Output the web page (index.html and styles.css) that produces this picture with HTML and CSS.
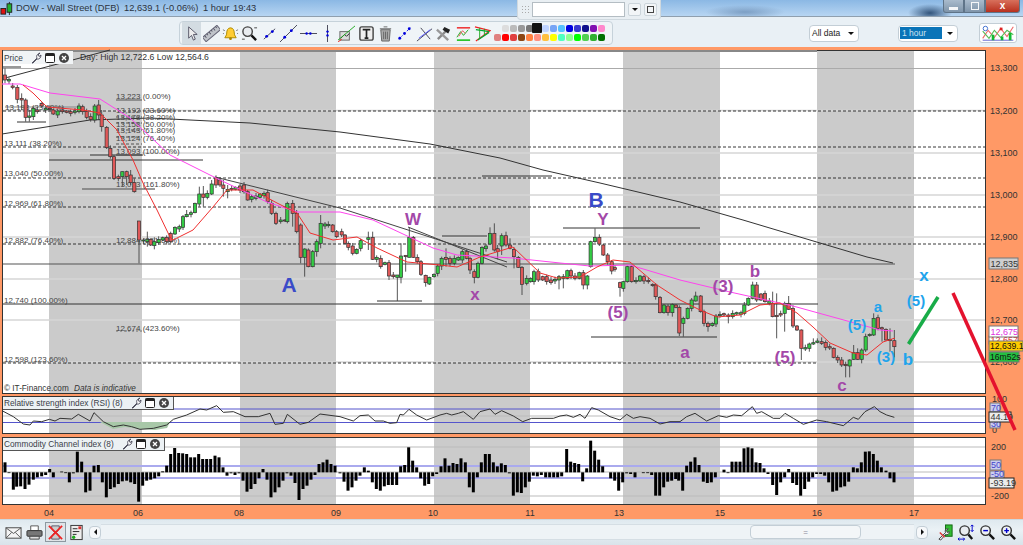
FILE: index.html
```html
<!DOCTYPE html>
<html lang="en">
<head>
    <meta charset="UTF-8">
    <title>DOW - Wall Street (DFB)</title>
    <link rel="stylesheet" href="styles.css">
</head>
<body>

    <svg class="icon-defs">
        <symbol id="i-pointer" viewBox="0 0 18 18"><path d="M6 2v12l3-3 2 5 2-1-2-5h4z" fill="#eee" stroke="#556"/></symbol>
        <symbol id="i-ruler" viewBox="0 0 18 18"><g transform="rotate(-40 9 9)"><rect x="-1" y="6" width="20" height="6" fill="#c0c4ca" stroke="#667"/><path d="M2 6v3M5 6v2M8 6v3M11 6v2M14 6v3M17 6v2" stroke="#556"/></g></symbol>
        <symbol id="i-bell" viewBox="0 0 18 18"><path d="M9 3c-3 0-4 3-4 5.5 0 3-2 4-2 5h12c0-1-2-2-2-5C13 6 12 3 9 3z" fill="#fc3" stroke="#a80"/><circle cx="9" cy="14.5" r="1.5" fill="#a80"/><path d="M1 5l2 1M1 9h1M17 5l-2 1M17 9h-1" stroke="#777"/></symbol>
        <symbol id="i-zoom" viewBox="0 0 18 18"><circle cx="7" cy="7" r="5" fill="#e8ecf0" stroke="#444" stroke-width="1.5"/><path d="M11 11l5 5" stroke="#111" stroke-width="2.5"/><path d="M1 15h3M14 3h3" stroke="#444"/></symbol>
        <symbol id="i-seg" viewBox="0 0 18 18"><path d="M3 15L15 4" stroke="#445"/><circle cx="6" cy="12" r="1.5" fill="#00d"/><circle cx="12" cy="7" r="1.5" fill="#00d"/></symbol>
        <symbol id="i-ray" viewBox="0 0 18 18"><path d="M0 18L18 0" stroke="#445"/><circle cx="5" cy="13" r="1.5" fill="#00d"/><circle cx="12" cy="6" r="1.5" fill="#00d"/></symbol>
        <symbol id="i-hline" viewBox="0 0 18 18"><path d="M0 9h18" stroke="#445"/><circle cx="7" cy="9" r="1.3" fill="#00d"/><circle cx="11" cy="9" r="1.3" fill="#00d"/></symbol>
        <symbol id="i-vline" viewBox="0 0 18 18"><path d="M9 0v18" stroke="#445"/><circle cx="9" cy="7" r="1.3" fill="#00d"/><circle cx="9" cy="11" r="1.3" fill="#00d"/></symbol>
        <symbol id="i-trend" viewBox="0 0 18 18"><rect x="2" y="7" width="10" height="9" fill="#ddd" stroke="#666"/><path d="M3 14l4-4 2 2 3-3" stroke="#222" fill="none"/><path d="M0 16L18 1" stroke="#2a2"/><path d="M0 18l4-3" stroke="#e22"/></symbol>
        <symbol id="i-text" viewBox="0 0 18 18"><rect x="2" y="2" width="14" height="14" rx="2" fill="#eee" stroke="#444" stroke-width="1.5"/><path d="M5 5h8M9 5v9M7 14h4" stroke="#222" stroke-width="1.8" fill="none"/></symbol>
        <symbol id="i-trash" viewBox="0 0 18 18"><path d="M4 5h10l-1 12H5z" fill="#aaa" stroke="#666"/><path d="M3 4h12M7 2h4M7 7v8M9 7v8M11 7v8" stroke="#666"/></symbol>
        <symbol id="i-dotted" viewBox="0 0 18 18"><path d="M3 15L15 3" stroke="#00d" stroke-dasharray="1.5 2.5"/><circle cx="4" cy="14" r="1.5" fill="#00d"/><circle cx="9" cy="9" r="1.5" fill="#00d"/><circle cx="14" cy="4" r="1.5" fill="#00d"/></symbol>
        <symbol id="i-cross" viewBox="0 0 18 18"><path d="M1 17L17 4M5 3l10 12" stroke="#445"/><path d="M3 14L15 5" stroke="#55f"/></symbol>
        <symbol id="i-tools" viewBox="0 0 18 18"><path d="M3 15L13 5" stroke="#888" stroke-width="2.5"/><path d="M2 5l12 11" stroke="#999" stroke-width="2.5"/><path d="M10 2l6 3-2 4-6-4z" fill="#222"/></symbol>
        <symbol id="i-fib" viewBox="0 0 18 18"><path d="M2 3h14" stroke="#e22" stroke-width="1.5"/><path d="M2 16h14" stroke="#0b0" stroke-width="1.5"/><path d="M2 13l4-6 3 4 5-6" stroke="#2a2" fill="none"/><path d="M4 12l4-6 3 3" stroke="#e55" fill="none"/></symbol>
        <symbol id="i-fan" viewBox="0 0 18 18"><path d="M1 2l16 4-15 11" stroke="#e22" fill="none" stroke-width="1.3"/><path d="M2 5l14 2M4 16L16 8" stroke="#0a3" stroke-width="1.3"/><path d="M6 3v11M11 4v7" stroke="#2a2"/></symbol>
        <symbol id="i-wrench" viewBox="0 0 12 12"><path d="M2 11l5-5c-1-2 0-4 3-5L8 3l1 1.5L11 3c0 3-2 4.5-4 4l-4 4z" fill="#fff" stroke="#445" stroke-width=".9"/></symbol>
        <symbol id="i-window" viewBox="0 0 12 12"><rect x="1.5" y="1.5" width="9" height="9" rx="1" fill="#fff" stroke="#222"/><rect x="1.5" y="1.5" width="9" height="2.5" fill="#222"/></symbol>
        <symbol id="i-close" viewBox="0 0 12 12"><circle cx="6" cy="6" r="5" fill="#444"/><path d="M4 4l4 4M8 4l-4 4" stroke="#fff" stroke-width="1.3"/></symbol>
        <symbol id="i-mail" viewBox="0 0 18 18"><rect x="1" y="4" width="16" height="11" fill="#f4f4f4" stroke="#444"/><path d="M1 4l8 6 8-6M1 15l6-6M17 15l-6-6" stroke="#555" fill="none"/></symbol>
        <symbol id="i-print" viewBox="0 0 18 18"><path d="M5 2h8v5H5z" fill="#fff" stroke="#555"/><rect x="1" y="7" width="16" height="6" rx="1" fill="#777" stroke="#333"/><path d="M4 13h10v3H4z" fill="#ddd" stroke="#444"/></symbol>
        <symbol id="i-glass" viewBox="0 0 18 18"><path d="M5 2h8v3l-3 4 3 4v3H5v-3l3-4-3-4z" fill="#ccc" stroke="#556"/><path d="M2 2l14 14M16 2L2 16" stroke="#e22" stroke-width="1.8"/></symbol>
        <symbol id="i-doc" viewBox="0 0 18 18"><rect x="3" y="1.5" width="12" height="15" fill="#eee" stroke="#333"/><path d="M5 5h5M5 8h7M5 11h4" stroke="#222"/><rect x="11" y="2.5" width="3" height="3" fill="#d33"/><circle cx="6" cy="14" r="1.8" fill="#2a2"/></symbol>
        <symbol id="i-wrench-green" viewBox="0 0 18 18"><rect x="9" y="1" width="7" height="12" fill="#3b3" stroke="#161"/><path d="M2 16l7-7c-1-2 0-4 3-4l-2 2 1 2 2-1c0 3-2 4-4 3l-5 6z" fill="#eee" stroke="#444"/><path d="M3 9l5 5" stroke="#d33" stroke-width="1.5"/></symbol>
        <symbol id="i-zoom-fit" viewBox="0 0 18 18"><circle cx="7" cy="7" r="5" fill="#e8ecf0" stroke="#333" stroke-width="1.5"/><path d="M11 11l4 5" stroke="#111" stroke-width="2.5"/><path d="M15 1v7M13.5 2.5L15 1l1.5 1.5M13.5 6.5L15 8l1.5-1.5M0 16h7M1.5 14.5L0 16l1.5 1.5M5.5 14.5L7 16l-1.5 1.5" stroke="#00c" fill="none"/></symbol>
        <symbol id="i-zoom-out" viewBox="0 0 18 18"><circle cx="7" cy="7" r="5" fill="#eef2f5" stroke="#333" stroke-width="1.5"/><path d="M11 11l5 5" stroke="#111" stroke-width="2.5"/><path d="M4.5 7h5" stroke="#00c" stroke-width="1.5"/></symbol>
        <symbol id="i-zoom-in" viewBox="0 0 18 18"><circle cx="7" cy="7" r="5" fill="#eef2f5" stroke="#333" stroke-width="1.5"/><path d="M11 11l5 5" stroke="#111" stroke-width="2.5"/><path d="M4.5 7h5M7 4.5v5" stroke="#00c" stroke-width="1.5"/></symbol>
    </svg>

    <header class="title-bar">
        <svg class="app-icon" viewBox="0 0 16 16">
            <rect x="1" y="8" width="5" height="6" fill="#e01010" stroke="#222"/>
            <path d="M10 1v14" stroke="#222"/>
            <rect x="7.5" y="3" width="5" height="9" fill="#20b030" stroke="#222"/>
        </svg>
        <span class="title-name">DOW - Wall Street (DFB)</span>
        <span class="title-price">12,639.1 (-0.06%)</span>
        <span class="title-interval">1 hour</span>
        <span class="title-time">19:43</span>
        <div class="window-buttons">
            <div class="win-btn win-min"><i class="min-glyph"></i></div>
            <div class="win-btn win-max"><i class="max-glyph"></i></div>
            <div class="win-btn win-close">x</div>
        </div>
    </header>

    <div class="toolbar">
        <div class="tool-group">
            <div class="tool tool-active"><svg><use href="#i-pointer"/></svg></div>
            <div class="tool"><svg><use href="#i-ruler"/></svg></div>
            <div class="tool"><svg><use href="#i-bell"/></svg></div>
            <div class="tool"><svg><use href="#i-zoom"/></svg></div>
            <div class="tool"><svg><use href="#i-seg"/></svg></div>
            <div class="tool"><svg><use href="#i-ray"/></svg></div>
            <div class="tool"><svg><use href="#i-hline"/></svg></div>
            <div class="tool"><svg><use href="#i-vline"/></svg></div>
            <div class="tool"><svg><use href="#i-trend"/></svg></div>
            <div class="tool"><svg><use href="#i-text"/></svg></div>
            <div class="tool"><svg><use href="#i-trash"/></svg></div>
            <div class="tool"><svg><use href="#i-dotted"/></svg></div>
            <div class="tool"><svg><use href="#i-cross"/></svg></div>
            <div class="tool"><svg><use href="#i-tools"/></svg></div>
            <div class="tool"><svg><use href="#i-fib"/></svg></div>
            <div class="tool"><svg><use href="#i-fan"/></svg></div>
            <div class="palette" id="palette"></div>
        </div>
        <div class="select select-range"><span class="select-value">All data</span><i class="caret"></i></div>
        <div class="select select-interval"><span class="select-value selected">1 hour</span><i class="caret"></i></div>
        <div class="style-button">
            <svg viewBox="0 0 38 20">
                <path d="M2 16l6-9 7 8 7-10 7 9 7-11" fill="none" stroke="#e66" stroke-width="1.2"/>
                <path d="M2 8l7 8 6-9 7 8 7-8 7 5" fill="none" stroke="#5b5" stroke-width="1.2"/>
                <path d="M2 18h34" stroke="#55c"/>
                <path d="M12 12h3v6h-3zM22 14h3v4h-3zM31 10h3v8h-3z" fill="#1b3"/>
                <path d="M21 4h3v3h-3z" fill="#d22"/>
                <circle cx="5" cy="5" r="2.5" fill="#fff" stroke="#36c"/>
            </svg>
        </div>
    </div>

    <div class="name-panel">
        <i class="grip"></i>
        <div class="name-input"></div>
        <div class="panel-btn"><i class="caret"></i></div>
        <div class="panel-btn"><i class="panel-square"></i></div>
    </div>

    <main class="chart-area">
        <section class="pane">
            <svg class="plot" id="price" width="1023" height="344" viewBox="0 50 1023 344">
                <g id="price-back"></g>
                <g class="fib">
                    <text x="116" y="99">13,223 (0.00%)</text>
                    <text x="116" y="113">13,192 (23.60%)</text>
                    <text x="116" y="120">13,173 (38.20%)</text>
                    <text x="116" y="127">13,158 (50.00%)</text>
                    <text x="116" y="133">13,143 (61.80%)</text>
                    <text x="116" y="141">13,124 (76.40%)</text>
                    <text x="116" y="154">13,093 (100.00%)</text>
                    <text x="116" y="187">13,013 (161.80%)</text>
                    <text x="116" y="243">12,884 (261.80%)</text>
                    <text x="116" y="331">12,674 (423.60%)</text>
                    <text x="5" y="110">13,193 (23.60%)</text>
                    <text x="4" y="146">13,111 (38.20%)</text>
                    <text x="4" y="176">13,040 (50.00%)</text>
                    <text x="4" y="206">12,969 (61.80%)</text>
                    <text x="4" y="243">12,882 (76.40%)</text>
                    <text x="4" y="303">12,740 (100.00%)</text>
                    <text x="4" y="362">12,598 (123.60%)</text>
                </g>
                <g id="price-front"></g>
                <text class="day-range" x="80" y="60">Day: High 12,722.6 Low 12,564.6</text>
                <text class="credit" x="4" y="391">© IT-Finance.com <tspan class="credit-note" dx="3">Data is indicative</tspan></text>

                <g class="wave wave-blue">
                    <text class="big" x="289" y="292">A</text>
                    <text class="big" x="596" y="207">B</text>
                </g>
                <g class="wave wave-purple">
                    <text x="413" y="225">W</text>
                    <text x="603" y="225">Y</text>
                    <text x="475" y="300">x</text>
                    <text x="618" y="318">(5)</text>
                    <text x="685" y="358">a</text>
                    <text x="723" y="292">(3)</text>
                    <text x="755" y="277">b</text>
                    <text x="785" y="363">(5)</text>
                    <text x="842" y="391">c</text>
                </g>
                <g class="wave wave-cyan">
                    <text class="small" x="878" y="312">a</text>
                    <text class="small" x="857" y="330">(5)</text>
                    <text class="small" x="886" y="362">(3)</text>
                    <text x="908" y="365">b</text>
                    <text x="924" y="281">x</text>
                    <text class="small" x="916" y="306">(5)</text>
                </g>
                <path class="green-leg" d="M908.5 344L938 297"/>

                <g class="axis">
                    <text x="990" y="71">13,300</text>
                    <text x="990" y="114">13,200</text>
                    <text x="990" y="156">13,100</text>
                    <text x="990" y="198">13,000</text>
                    <text x="990" y="240">12,900</text>
                    <text x="990" y="282">12,800</text>
                    <text x="990" y="323">12,700</text>
                    <text x="990" y="365">12,600</text>
                </g>
                <g class="axis-tags">
                    <rect class="tag-gray" x="989" y="258" width="29" height="11"/>
                    <text x="990.5" y="266.5">12,835</text>
                    <rect class="tag-red" x="989" y="336" width="29" height="8"/>
                    <text class="txt-red" x="990.5" y="342.5">12,657</text>
                    <rect class="tag-magenta" x="989" y="326" width="29" height="11"/>
                    <text class="txt-magenta" x="990.5" y="334.5">12,675</text>
                    <rect class="tag-yellow" x="989" y="341" width="34" height="10"/>
                    <text class="txt-tight" x="990" y="349">12,639.1</text>
                    <rect class="tag-green" x="989" y="352" width="30" height="10"/>
                    <text class="txt-tight" x="990" y="360">16m52s</text>
                </g>
            </svg>
            <div class="pane-tag">
                <span class="tag-name">Price</span>
                <svg><use href="#i-wrench"/></svg><svg><use href="#i-window"/></svg><svg><use href="#i-close"/></svg>
            </div>
        </section>

        <section class="pane">
            <svg class="plot" id="rsi" width="1023" height="38" viewBox="0 396 1023 38">
                <g id="rsi-back"></g>
                <g id="rsi-front"></g>
                <g class="axis">
                    <text x="992" y="402">100</text>
                    <text x="992" y="433">0</text>
                </g>
                <g class="axis-tags">
                    <rect class="tag-blue" x="990" y="403" width="10" height="9"/>
                    <text class="txt-blue" x="991" y="411">70</text>
                    <rect class="tag-blue" x="990" y="419" width="10" height="9"/>
                    <text class="txt-blue" x="991" y="427">30</text>
                    <rect class="tag-white" x="989" y="412" width="22" height="10"/>
                    <text x="990.5" y="420">44.19</text>
                </g>
            </svg>
            <div class="pane-tag">
                <span class="tag-name">Relative strength index (RSI) (8)</span>
                <svg><use href="#i-wrench"/></svg><svg><use href="#i-window"/></svg><svg><use href="#i-close"/></svg>
            </div>
        </section>

        <section class="pane">
            <svg class="plot" id="cci" width="1023" height="68" viewBox="0 437 1023 68">
                <g id="cci-back"></g>
                <g id="cci-front"></g>
                <g class="axis">
                    <text x="991" y="450">200</text>
                    <text x="991" y="499">-200</text>
                </g>
                <g class="axis-tags">
                    <rect class="tag-blue" x="990" y="460" width="11" height="10"/>
                    <text class="txt-blue" x="991" y="468">50</text>
                    <rect class="tag-blue" x="990" y="471" width="14" height="8"/>
                    <text class="txt-blue" x="991" y="477">-50</text>
                    <rect class="tag-white" x="989" y="478" width="25" height="10"/>
                    <text x="990.5" y="486">-93.19</text>
                </g>
            </svg>
            <div class="pane-tag">
                <span class="tag-name">Commodity Channel index (8)</span>
                <svg><use href="#i-wrench"/></svg><svg><use href="#i-window"/></svg><svg><use href="#i-close"/></svg>
            </div>
        </section>

        <svg class="date-axis" width="1023" height="14" viewBox="0 505 1023 14">
            <text x="49" y="516">04</text>
            <text x="138" y="516">06</text>
            <text x="239" y="516">08</text>
            <text x="336" y="516">09</text>
            <text x="433" y="516">10</text>
            <text x="530" y="516">11</text>
            <text x="619" y="516">13</text>
            <text x="720" y="516">15</text>
            <text x="817" y="516">16</text>
            <text x="914" y="516">17</text>
        </svg>
    </main>

    <footer class="bottom-bar">
        <div class="tool tool-small"><svg><use href="#i-mail"/></svg></div>
        <div class="tool tool-small"><svg><use href="#i-print"/></svg></div>
        <div class="tool tool-small tool-pressed"><svg><use href="#i-glass"/></svg></div>
        <div class="tool tool-small"><svg><use href="#i-doc"/></svg></div>
        <div class="scroll-btn"><i class="arrow-left"></i></div>
        <div class="scroll-track">
            <div class="scroll-thumb">=</div>
        </div>
        <div class="scroll-btn"><i class="arrow-right"></i></div>
        <div class="tool tool-small tool-gap"><svg><use href="#i-wrench-green"/></svg></div>
        <div class="tool tool-small"><svg><use href="#i-zoom-fit"/></svg></div>
        <div class="tool tool-small"><svg><use href="#i-zoom-out"/></svg></div>
        <div class="tool tool-small"><svg><use href="#i-zoom-in"/></svg></div>
    </footer>

    <svg class="red-leg" width="1023" height="545"><path d="M953 293L1015 430"/></svg>

    <script src="chart.js"></script>
</body>
</html>
```

FILE: styles.css
```css
* {
    box-sizing: border-box;
}

body {
    margin: 0;
    width: 1023px;
    height: 545px;
    overflow: hidden;
    position: relative;
    display: flex;
    flex-direction: column;
    font-family: "Liberation Sans", Arial, sans-serif;
    background-color: #e9f0f5;
    color: #222;
}

.icon-defs {
    position: absolute;
    width: 0;
    height: 0;
}

.title-bar {
    height: 17px;
    display: flex;
    align-items: center;
    position: relative;
    font-size: 9.3px;
    white-space: nowrap;
    color: #2a3340;
    background:
        radial-gradient(ellipse 22px 9px at 930px 13px, #33557c, transparent),
        radial-gradient(ellipse 40px 7px at 745px 12px, #7d9fc4, transparent),
        linear-gradient(180deg, #8bb8e4, #b7d5f2);
    border-bottom: 1px solid #8f9fae;
}

.app-icon {
    width: 15px;
    height: 15px;
}

.title-name {
    margin-left: 1px;
    width: 108px;
}

.title-price {
    width: 79px;
}

.title-interval {
    width: 30px;
}

.window-buttons {
    position: absolute;
    right: 3px;
    top: 0;
    display: flex;
    height: 13px;
}

.win-btn {
    height: 13px;
    width: 21px;
    border: 1px solid #5f7488;
    border-top: none;
    background: linear-gradient(180deg, #a9bbcc, #7f95aa);
    display: flex;
    align-items: center;
    justify-content: center;
}

.win-min {
    border-radius: 0 0 0 3px;
}

.win-close {
    width: 35px;
    color: #fff;
    font-weight: bold;
    font-size: 10px;
    line-height: 10px;
    border-radius: 0 0 3px 0;
    background: linear-gradient(180deg, #d8705c, #b8301e);
}

.min-glyph {
    width: 9px;
    height: 3px;
    margin-top: 5px;
    background: #f4f6f8;
}

.max-glyph {
    width: 8px;
    height: 8px;
    border: 1px solid #f4f6f8;
}

.toolbar {
    height: 30px;
    display: flex;
    align-items: center;
    background-color: #e9f0f5;
    padding: 2px 6px 0 179px;
}

.tool-group {
    width: 434px;
    height: 24px;
    display: flex;
    align-items: center;
    padding-left: 2px;
    background-color: #eff4f7;
    border: 1px solid #c6d2da;
    border-radius: 4px;
}

.tool {
    width: 19.4px;
    height: 22px;
    display: flex;
    flex: none;
    align-items: center;
    justify-content: center;
}

.tool svg {
    width: 17px;
    height: 17px;
}

.tool-active {
    background-color: #d3dce2;
}

.palette {
    width: 112px;
    height: 17px;
    margin-left: 1px;
    display: flex;
    flex-wrap: wrap;
}

.swatch {
    width: 7px;
    height: 7px;
    margin: .5px;
    border-radius: 2px;
}

.swatch-spacer {
    visibility: hidden;
}

.swatch-black {
    margin: -2px -1px 0;
    width: 10px;
    height: 10px;
    border-radius: 1px;
}

.select {
    display: flex;
    align-items: center;
    height: 17px;
    font-size: 8.5px;
    background-color: #fff;
    border: 1px solid #c3ced6;
    border-radius: 4px;
}

.select-range {
    width: 50px;
    margin-left: auto;
    padding-left: 2px;
}

.select-interval {
    width: 60px;
    margin-left: 39px;
    padding-left: 1px;
}

.select-value {
    flex: 1;
}

.select-value.selected {
    background-color: #0a74b8;
    color: #cfe3f0;
    padding: 1px 2px;
    margin-right: 2px;
}

.caret {
    width: 0;
    height: 0;
    margin: 0 4px 0 3px;
    border-left: 3px solid transparent;
    border-right: 3px solid transparent;
    border-top: 3px solid #111;
}

.style-button {
    width: 38px;
    height: 20px;
    margin-left: 21px;
    background-color: #fff;
    border: 1px solid #c3ced6;
    border-radius: 3px;
}

.style-button svg {
    width: 100%;
    height: 100%;
    display: block;
}

.name-panel {
    position: absolute;
    left: 517px;
    top: 0;
    width: 144px;
    height: 20px;
    display: flex;
    align-items: center;
    padding: 0 3px 1px 3px;
    background-color: #e9eff3;
    border: 1px solid #d0d9df;
    border-top: none;
    border-radius: 0 0 4px 4px;
}

.grip {
    width: 10px;
    height: 9px;
    margin-right: 1px;
    background-image: radial-gradient(#aaa 1px, transparent 1px);
    background-size: 3px 3px;
}

.name-input {
    width: 94px;
    height: 15px;
    background-color: #fff;
    border: 1px solid #b4bdc3;
}

.panel-btn {
    width: 13px;
    height: 13px;
    margin-left: 3px;
    display: flex;
    align-items: center;
    justify-content: center;
    background-color: #f2f5f7;
    border: 1px solid #ccd5db;
    border-radius: 2px;
}

.panel-btn .caret {
    margin: 0;
}

.panel-square {
    width: 7px;
    height: 7px;
    border: 1px solid #444;
}

.chart-area {
    height: 472px;
    padding-top: 3px;
    display: flex;
    flex-direction: column;
    gap: 2px;
    background-color: #ff9966;
}

.pane {
    position: relative;
    height: 38px;
}

.pane:nth-child(1) {
    height: 344px;
}

.pane:nth-child(2) {
    margin-bottom: 1px;
}

.pane:nth-child(3) {
    height: 68px;
}

.plot,
.date-axis {
    display: block;
    overflow: visible;
    font-family: "Liberation Sans", Arial, sans-serif;
}

.date-axis {
    margin-top: -2px;
}

.date-axis text {
    font-size: 9px;
    fill: #333;
    text-anchor: middle;
}

.pane-tag {
    position: absolute;
    left: 3px;
    top: 1px;
    height: 13px;
    display: flex;
    align-items: center;
    gap: 2px;
    padding: 0 3px 0 1px;
    font-size: 8.3px;
    color: #3a4048;
    background-color: #ecf1f4;
    border-right: 1px solid #555;
    border-bottom: 1px solid #555;
}

.pane:first-child .pane-tag {
    border: none;
    background-color: #f1f4f6;
}

.pane-tag svg {
    width: 12px;
    height: 12px;
}

.tag-name {
    margin-right: 5px;
}

.fib text {
    font-size: 8px;
    fill: #444;
}

.day-range {
    font-size: 8.7px;
    fill: #333;
}

.credit {
    font-size: 8.2px;
    fill: #333;
}

.credit-note {
    font-style: italic;
}

.wave text {
    font-weight: bold;
    font-size: 17px;
    text-anchor: middle;
}

.wave .big {
    font-size: 21px;
}

.wave .small {
    font-size: 15px;
}

.wave-blue text {
    fill: #3a4bc8;
}

.wave-purple text {
    fill: #a348a8;
}

.wave-cyan text {
    fill: #1fa4ec;
}

.green-leg {
    fill: none;
    stroke: #18ac48;
    stroke-width: 3.5px;
}

.axis text,
.axis-tags text {
    font-size: 9px;
    fill: #333;
}

.axis-tags .txt-tight {
    font-size: 8.6px;
    fill: #111;
}

.axis-tags rect {
    stroke: #777;
    stroke-width: 1px;
}

.tag-gray {
    fill: #cfcfcf;
}

.tag-red {
    fill: #fff;
}

.axis-tags .txt-red {
    fill: #e02020;
}

.tag-magenta {
    fill: #fff;
}

.axis-tags .txt-magenta {
    fill: #e030e0;
}

.tag-yellow {
    fill: #ffcc00;
}

.tag-green {
    fill: #22c040;
}

.tag-blue {
    fill: #c9cdf0;
}

.axis-tags .txt-blue {
    fill: #4444c8;
}

.axis-tags .tag-white {
    fill: #ececec;
    stroke: #222;
}

.bottom-bar {
    height: 26px;
    display: flex;
    align-items: center;
    padding: 0 4px 1px 3px;
    background: linear-gradient(180deg, #dfe9ef, #eaf1f5 40%, #d9e3ea);
    border-top: 1px solid #cdd8df;
}

.tool-small {
    width: 21px;
    height: 20px;
}

.tool-pressed {
    background-color: #dfe4e8;
    border: 1px solid #8d98a0;
}

.tool-gap {
    margin-left: 7px;
}

.scroll-btn {
    width: 12px;
    height: 13px;
    margin-left: 2px;
    display: flex;
    align-items: center;
    justify-content: center;
    background-color: #f6f8fa;
    border: 1px solid #c3ced6;
    border-radius: 4px;
}

.arrow-left {
    border-top: 3px solid transparent;
    border-bottom: 3px solid transparent;
    border-right: 3px solid #111;
}

.arrow-right {
    border-top: 3px solid transparent;
    border-bottom: 3px solid transparent;
    border-left: 3px solid #111;
}

.scroll-track {
    flex: 1;
    height: 16px;
    display: flex;
    padding-left: 649px;
    background-color: #eef3f6;
    border-top: 1px solid #d5dee4;
    border-bottom: 1px solid #d5dee4;
}

.scroll-thumb {
    width: 111px;
    font-size: 8px;
    line-height: 13px;
    text-align: center;
    color: #889;
    background-color: #f3f6f8;
    border: 1px solid #c3ced6;
    border-radius: 4px;
}

.red-leg {
    position: absolute;
    left: 0;
    top: 0;
    pointer-events: none;
}

.red-leg path {
    fill: none;
    stroke: #e4122e;
    stroke-width: 3.5px;
}
```

FILE: chart.js
```js
// colour palette in the toolbar
const row1 = ["#ddd", "#bbb", "#999", "#777", "#111", "#c0d4ff", "#77a5f5", "#55c0ff", "#0000e0", "#3838d0", "#10108c", "#8010b0", "#ff88cc"];
const row2 = ["#e08080", "#ff0000", "#e04040", "#8b4513", "#ff8040", "#ff9080", "#ffc040", "#ffff00", "#50ffc0", "#90ff90", "#00ff00", "#50d050", "#30b030", "#007000"];

let swatches = '<i class="swatch swatch-spacer"></i>';
row1.forEach(c => {
    const cls = c === "#111" ? "swatch swatch-black" : "swatch";
    swatches += `<i class="${cls}" style="background:${c}"></i>`;
});
row2.forEach(c => {
    swatches += `<i class="swatch" style="background:${c}"></i>`;
});
document.getElementById("palette").innerHTML = swatches;

const bands = [[49, 142], [240, 336], [434, 530], [623, 720], [817, 914]];

function plotBack(top, bottom) {
    let s = `<rect x="2.5" y="${top + 0.5}" width="983" height="${bottom - top - 1}" fill="#fff" stroke="#333"/>`;
    bands.forEach(b => {
        s += `<rect x="${b[0]}" y="${top + 1}" width="${b[1] - b[0]}" height="${bottom - top - 2}" fill="#cbcbcb"/>`;
    });
    return s;
}

function hline(x1, x2, y, color, width, dash) {
    const d = dash ? ` stroke-dasharray="${dash}"` : "";
    return `<path d="M${x1} ${y}H${x2}" stroke="${color}" stroke-width="${width}"${d}/>`;
}

function poly(points, color, width) {
    const p = points.map(q => q.join(",")).join(" ");
    return `<polyline points="${p}" fill="none" stroke="${color}" stroke-width="${width}"/>`;
}

// ---- price pane ----
let back = plotBack(50, 394);
back += `<path d="M3 51H817" stroke="#888" stroke-width="2"/>`;
back += hline(3, 985, 68.5, "#aaa", 1);
[110.5, 153, 195, 237, 279, 320, 362].forEach(y => {
    back += hline(3, 985, y, "#d6d6d6", 1.6);
});

// fibonacci levels
[111, 147, 178, 207, 244].forEach(y => {
    back += hline(3, 985, y, "#222", 0.9, "3 2");
});
back += hline(3, 818, 363, "#222", 0.9, "3 2");
[100, 117, 123, 130, 137, 144, 155].forEach(y => {
    back += hline(116, 142, y, "#333", 0.8, y === 100 || y === 155 ? "" : "3 2");
});
back += hline(116, 142, 331, "#555", 0.8, "2 2");

back += hline(3, 895, 264, "#555", 1.2);
back += hline(3, 818, 304, "#333", 1);

// short horizontal markers
[[2, 21, 67], [17, 46, 122], [90, 143, 155], [49, 203, 160], [482, 552, 176], [563, 700, 228], [377, 422, 301], [442, 487, 236], [591, 717, 337]].forEach(m => {
    back += hline(m[0], m[1], m[2], "#333", 1);
});
back += hline(82, 155, 189, "#777", 1.4);
back += hline(5, 78, 107, "#888", 1.2);

// trend lines
back += poly([[5, 78], [110, 50]], "#333", 1);
back += poly([[2, 134], [90, 120], [150, 118], [250, 123], [340, 132], [430, 144], [500, 158], [543, 170], [600, 183], [680, 202], [743, 220], [820, 243], [867, 257], [893, 263]], "#333", 1);
back += poly([[215, 177], [340, 208], [507, 262]], "#444", 1);
back += poly([[408, 227], [507, 267]], "#444", 1);
document.getElementById("price-back").innerHTML = back;

// candles read off the chart: [x, top, bottom, colour, high, low]
const candles = [];

function addCandles(ox, oy, rows) {
    rows.forEach(r => {
        candles.push({
            x: ox + r[0] / 3,
            top: oy + r[1] / 3,
            bot: oy + r[2] / 3,
            up: r[3] === "g",
            hi: r[4] === undefined ? null : oy + r[4] / 3,
            lo: r[5] === undefined ? null : oy + r[5] / 3
        });
    });
}

addCandles(0, 0, [
    [15,225,240,"r",205,250],[27,238,243,"g"],[38,258,262,"r"],[52,262,298,"r",255,310],[65,295,300,"r",280,330],
    [77,300,352,"r",295,365],[88,348,352,"g",330,365],[100,325,350,"g",320,360],[112,330,335,"r"],[125,310,318,"r"],
    [137,325,330,"g"],[150,325,328,"r"],[160,330,342,"r"],[173,333,345,"g"],[187,330,335,"r"],[200,333,337,"r"],
    [212,335,340,"r"],[225,333,337,"g"],[237,318,335,"g",310,340],[248,320,335,"r"],[260,335,352,"r"],[272,350,358,"r",340,365],
    [284,318,360,"g",312,368],[296,315,345,"r",300,360],[305,345,380,"r",330,395],[320,382,443,"r",378,447],[331,445,470,"r"],
    [342,470,535,"r",465,540],[355,530,535,"r"],[367,515,530,"g",515,560],[380,515,530,"r",512,555],[392,525,548,"r",510,555],
    [403,548,575,"r",535,578]
]);
addCandles(0, 180, [
    [417,123,180,"r",123,250],[430,180,183,"g"],[442,178,185,"g",155,200],[452,178,195,"r"],[463,185,197,"g",172,208],
    [476,178,188,"g"],[488,173,180,"g"],[500,172,185,"r"],[512,160,185,"r",155,190],[525,142,162,"g"],[538,140,147,"g"],
    [549,110,142,"g",105,150],[560,103,110,"g",90,112],[573,98,103,"g"],[585,70,98,"g",68,100],[598,42,72,"g",20,80],
    [610,42,52,"r",18,80],[622,40,52,"g"],[635,12,42,"g",0,45],[648,-8,15,"r"],[660,0,15,"r"],[670,15,25,"r",0,50],
    [683,28,35,"g",15,55],[695,25,28,"r"],[707,22,28,"g"],[720,18,30,"r"],[732,15,35,"r"],[743,35,60,"r",30,62],
    [755,50,58,"g"],[768,48,55,"g"],[780,42,52,"g"],[792,40,47,"g"],[803,38,65,"r"],[815,70,100,"r",60,105],
    [828,100,130,"r",95,135],[842,120,125,"g"],[855,120,123,"r"],[862,70,125,"g",65,130],[878,70,100,"r",60,140],
    [890,100,155,"r",90,160],[902,135,232,"r",130,250],[914,207,232,"g",205,290],[925,210,260,"r",205,262],
    [938,215,260,"g",210,262],[950,185,215,"g",178,230],[962,130,190,"g",105,205],[975,132,138,"g"],[985,133,137,"g"],
    [998,135,155,"r"],[1010,155,170,"r",150,175]
]);
addCandles(340, 170, [
    [5,185,195,"r"],[15,195,220,"r"],[25,220,232,"r"],[38,228,250,"r"],[50,238,250,"g"],[62,212,235,"g"],[85,203,208,"g",185,240],
    [98,202,268,"r",185,270],[110,262,268,"g"],[122,265,290,"r"],[135,278,283,"g"],[147,278,318,"r",270,330],[160,315,320,"r"],
    [172,315,322,"g",318,393],[183,258,322,"g",220,340],[197,256,260,"r",256,305],[208,202,262,"g",172,262],[220,202,262,"r",198,264],
    [232,262,275,"r"],[243,275,313,"r",270,318],[257,316,338,"r",314,350],[268,322,342,"g",320,345],[282,313,320,"g"],
    [293,288,310,"g"],[305,265,288,"g",260,300],[318,262,268,"r",235,290],[330,265,280,"r"],[343,265,280,"g"],[355,262,270,"g"],
    [367,245,270,"g"],[380,245,265,"r",238,268],[390,265,300,"r",260,312],[403,305,322,"r",298,340],[414,280,322,"g",275,325],
    [426,232,280,"g"],[438,228,236,"g"],[450,190,222,"g",172,224],[463,190,240,"r",160,245],[473,236,244,"r",225,268],
    [485,197,228,"g",190,255],[498,197,225,"r",185,230],[510,225,235,"r",205,238],[522,238,260,"r",232,295],[535,262,292,"r",258,294],
    [546,292,343,"r",288,375],[560,325,340,"g"],[572,325,335,"g"],[582,305,335,"g"],[595,305,330,"r"],[608,320,330,"r"],
    [620,320,335,"r"],[633,330,338,"r"],[645,328,333,"g",320,342],[657,320,330,"g",315,358],[670,320,325,"g",312,355],
    [682,302,325,"g"],[693,302,318,"r"],[705,318,325,"r"],[718,308,325,"g"],[730,308,345,"r",300,358],[742,318,345,"g",315,358],
    [752,215,290,"g"],[765,202,215,"g",175,218],[778,202,222,"r"],[790,225,255,"r"],[803,255,275,"r"],[815,275,303,"r",270,313],
    [825,293,298,"r",285,305],[840,338,352,"r",335,380],[850,335,355,"g",333,365],[862,290,335,"g"],[875,290,335,"r",285,338],
    [888,331,335,"g"],[900,318,333,"g"],[912,320,333,"r"],[925,331,335,"r"],[938,343,347,"r"],[947,345,380,"r"],
    [960,382,428,"r",378,430],[972,405,428,"g"],[984,408,428,"r"],[997,403,428,"g",400,440],[1008,405,412,"r"],[1018,412,489,"r"]
]);
addCandles(680, 220, [
    [10,295,310,"g",290,350],[23,265,295,"g"],[35,240,265,"g"],[47,228,243,"g",215,245],[62,228,275,"r",225,278],[72,275,310,"r"],
    [84,310,320,"r",305,335],[97,310,317,"g"],[108,288,312,"g"],[120,283,287,"g"],[132,281,285,"r"],[145,285,290,"r",280,310],
    [158,280,290,"g"],[170,278,282,"g"],[183,278,283,"g"],[193,255,280,"g"],[205,235,255,"g"],[218,195,235,"g",185,238],
    [230,195,240,"r"],[243,222,240,"r"],[255,220,245,"r",212,248],[268,243,250,"g"],[278,250,290,"r",215,292],[290,286,290,"r",220,355],
    [302,281,285,"r"],[314,250,280,"g",245,335],[326,250,268,"r",228,270],[339,265,318,"r"],[351,318,330,"r"],[364,330,385,"r",328,420],
    [376,383,387,"g"],[388,372,385,"g",368,395],[400,368,372,"g",355,375],[412,363,367,"g",355,370],[425,365,370,"r",352,375],
    [437,367,382,"r"],[449,380,384,"r"],[461,385,412,"r"],[473,412,420,"r"],[485,420,435,"r"],[497,433,437,"r",425,472],
    [509,420,438,"g",418,472],[521,398,418,"g",375,420],[533,398,418,"r",385,420],[545,390,418,"g",385,430],[557,350,390,"g"],
    [569,343,347,"g"],[581,295,345,"g",280,348],[594,293,325,"r"],[606,323,327,"r",320,365],[618,328,360,"r",325,362],
    [630,358,362,"r",325,395],[643,362,380,"r",330,412]
]);

let front = "";
candles.forEach((c, i) => {
    const h = c.hi === null ? c.top - (i * 7 % 3 + 1) : c.hi;
    const l = c.lo === null ? c.bot + (i * 5 % 3 + 1) : c.lo;
    front += `<path d="M${c.x} ${h}V${l}" stroke="#444" stroke-width=".9"/>`;
    const fill = c.up ? "#33cc44" : "#e05858";
    front += `<rect x="${c.x - 1.6}" y="${c.top}" width="3.2" height="${Math.max(c.bot - c.top, 1)}" fill="${fill}" stroke="#333" stroke-width=".7"/>`;
});

const magenta = [[2, 84], [20, 84], [50, 93], [100, 99], [130, 118], [170, 155], [220, 180], [267, 202], [297, 212], [340, 212], [373, 220], [433, 248], [457, 255], [513, 258], [560, 263], [590, 266], [630, 265], [680, 280], [730, 292], [793, 306], [880, 330], [893, 331]];
const red = [[23, 85], [33, 93], [47, 107], [83, 110], [100, 113], [117, 130], [133, 160], [143, 183], [157, 210], [170, 237], [173, 240], [193, 230], [213, 207], [227, 190], [253, 190], [277, 203], [297, 213], [310, 233], [333, 240], [357, 237], [377, 248], [407, 262], [440, 265], [457, 267], [480, 257], [513, 247], [540, 273], [557, 278], [580, 277], [597, 267], [613, 260], [630, 262], [657, 285], [680, 300], [700, 310], [717, 317], [740, 315], [760, 305], [780, 303], [797, 313], [813, 327], [830, 343], [853, 353], [867, 355], [883, 342], [895, 338]];
front += poly(magenta, "#ff44ee", 1);
front += poly(red, "#f03030", 1);
document.getElementById("price-front").innerHTML = front;

// ---- rsi pane ----
let rsiBack = plotBack(396, 434);
rsiBack += hline(3, 985, 416, "#bbb", 1);
rsiBack += hline(3, 985, 409, "#5555cc", 1);
rsiBack += hline(3, 985, 422.5, "#5555cc", 1);
document.getElementById("rsi-back").innerHTML = rsiBack;

function readoff(ox, rows) {
    return rows.map(p => [ox + p[0] / 3, 385 + p[1] / 3]);
}

const rsi = [].concat(
    readoff(0, [[8,78],[40,95],[70,117],[90,120],[100,108],[125,110],[148,103],[165,108],[180,100],[215,102],[235,88],[270,108],[282,83],[310,110],[340,125],[370,120],[395,125],[420,133],[460,130],[500,120],[520,103],[560,90],[600,72],[620,75],[650,62],[670,82],[700,80],[735,95],[775,95],[810,85],[825,118],[850,115],[862,88],[900,118],[925,112],[960,87],[1020,95]]),
    readoff(340, [[40,108],[60,92],[85,90],[105,108],[130,108],[150,115],[170,113],[180,88],[190,90],[207,73],[230,90],[260,105],[300,90],[320,85],[335,90],[355,85],[370,80],[400,103],[420,80],[450,72],[465,88],[485,77],[520,93],[548,110],[575,100],[640,100],[660,93],[680,90],[700,97],[720,88],[735,100],[755,68],[775,75],[810,95],[840,105],[860,88],[880,100],[900,95],[930,100],[960,117],[990,110],[1020,110]]),
    readoff(680, [[20,95],[45,85],[80,108],[115,92],[140,97],[160,90],[185,92],[217,65],[230,85],[245,80],[280,100],[300,100],[315,85],[340,100],[370,118],[410,105],[440,110],[490,122],[520,97],[535,103],[555,80],[583,65],[600,80],[620,90],[643,97]])
);
// soft fill where the line drops under the 30 level
const dip = `<path d="M100 422L113 429L125 427L140 429L155 430L167 428L170 422Z" fill="#a8c8a8"/>`;
document.getElementById("rsi-front").innerHTML = dip + poly(rsi, "#333", 1);

// ---- cci pane ----
let cciBack = plotBack(437, 505);
[447, 472, 496].forEach(y => {
    cciBack += hline(3, 985, y, "#bbb", 1);
});
cciBack += hline(3, 985, 466, "#aaaaee", 2);
cciBack += hline(3, 985, 478, "#aaaaee", 2);
document.getElementById("cci-back").innerHTML = cciBack;

const cciRows = [
    [0, [[15,30],[27,0],[40,-52],[50,-43],[62,-42],[75,-50],[87,-37],[100,-22],[112,-15],[125,-12],[137,-8],[149,10],[160,-15],[185,1],[197,-2],[208,-30],[220,-3],[232,62],[245,32],[257,-60],[270,-55],[282,20],[295,22],[307,-30],[319,-75],[331,-50],[343,-45],[355,-35],[367,-27],[380,-25],[392,-30],[404,-35],[416,-88],[428,-40],[440,-25],[452,-22],[464,-18],[476,-12],[488,3],[500,20],[512,55],[524,73],[536,58],[548,57],[560,55],[572,45],[584,45],[596,55],[608,40],[620,40],[632,40],[645,50],[657,45],[669,15],[681,-10],[693,-3],[705,-8],[717,-3],[729,-25],[741,-58],[753,-50],[765,-35],[777,-18],[789,10],[801,-22],[813,-75],[825,-60],[837,-45],[849,-25],[861,-3],[873,-10],[885,-32],[897,-83],[909,-50],[921,-40],[933,-22],[945,-8],[957,25],[969,30],[981,38],[993,25],[1005,20]]],
    [340, [[0,-3],[12,-28],[24,-55],[36,-45],[48,-25],[60,-10],[73,15],[85,5],[97,-30],[109,-50],[121,-55],[133,-42],[145,-38],[157,-38],[170,-38],[182,18],[194,22],[206,75],[218,35],[230,15],[242,-18],[254,-40],[266,-35],[278,-12],[290,-5],[303,18],[315,42],[327,20],[339,28],[351,25],[363,42],[376,30],[388,-45],[400,-60],[412,-15],[424,30],[436,55],[448,55],[460,30],[472,18],[484,27],[496,22],[508,-3],[520,-70],[532,-60],[544,-62],[556,-45],[568,-28],[580,-10],[592,-12],[604,-8],[617,-15],[629,-15],[641,-15],[653,-15],[665,-12],[680,70],[692,32],[704,28],[716,25],[728,-27],[740,12],[752,95],[764,65],[776,38],[788,18],[812,-18],[824,-25],[836,-55],[848,-30],[860,-3],[872,-5],[885,-15],[910,-2],[923,-2],[935,-8],[947,-70],[959,-70],[971,-45],[983,-28],[995,-25],[1007,-20]]],
    [680, [[-4,-25],[8,-55],[20,20],[32,32],[45,45],[57,22],[70,-28],[82,-32],[94,-30],[106,-15],[132,8],[144,-2],[156,32],[168,32],[180,32],[192,72],[204,75],[216,72],[228,30],[240,28],[252,12],[264,-5],[278,-38],[290,-68],[302,-30],[314,-15],[326,10],[338,-32],[350,-38],[362,-70],[374,-50],[386,-28],[398,-15],[410,-5],[422,-5],[434,-10],[446,-30],[458,-58],[470,-55],[482,-45],[494,-42],[506,-28],[520,15],[532,12],[544,30],[556,62],[568,63],[580,55],[592,35],[604,15],[618,5],[630,-18],[642,-30]]]
];

const zero = 385 + 262 / 3;
let bars = "";
cciRows.forEach(section => {
    section[1].forEach(b => {
        const x = section[0] + b[0] / 3 - 1.5;
        const h = Math.max(Math.abs(b[1]) / 3, 0.8);
        const y = b[1] > 0 ? zero - h : zero;
        bars += `<rect x="${x}" y="${y}" width="3" height="${h}" fill="#000"/>`;
    });
});
document.getElementById("cci-front").innerHTML = bars;
```
